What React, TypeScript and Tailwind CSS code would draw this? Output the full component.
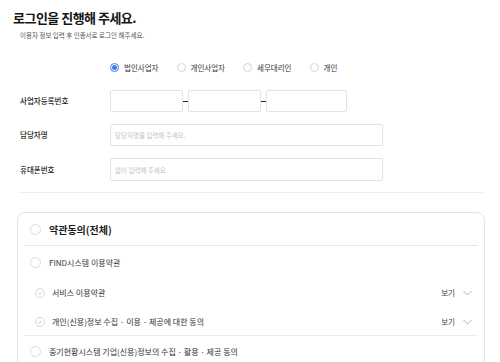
import React from 'react';

const FONT = "font-['Noto_Sans_CJK_KR','Noto_Sans',sans-serif]";

const BIZ_TYPES = ['법인사업자', '개인사업자', '세무대리인', '개인'];

const Radio: React.FC<{ checked?: boolean; label: string }> = ({ checked, label }) => (
  <label className="flex items-center gap-[5px]">
    <span
      className={`flex h-[9px] w-[9px] items-center justify-center rounded-full border ${
        checked ? 'border-[#3f7cf0]' : 'border-[#d4d4d4]'
      }`}
    >
      {checked && <span className="h-[5px] w-[5px] rounded-full bg-[#3f7cf0]" />}
    </span>
    <span className="text-[7.5px] leading-none text-[#333]">{label}</span>
  </label>
);

const Circle: React.FC<{ size?: string }> = ({ size = 'h-[11px] w-[11px]' }) => (
  <span className={`block shrink-0 rounded-full border border-[#dcdcdc] ${size}`} />
);

const CheckCircle: React.FC = () => (
  <svg width="10" height="10" viewBox="0 0 10 10" className="shrink-0">
    <circle cx="5" cy="5" r="4.5" fill="none" stroke="#d0d0d0" strokeWidth="0.8" />
    <polyline points="3,5.1 4.4,6.4 7,3.8" fill="none" stroke="#c4c4c4" strokeWidth="0.8" />
  </svg>
);

const Chevron: React.FC = () => (
  <svg width="9" height="6" viewBox="0 0 9 6">
    <polyline points="0.5,1 4.5,5 8.5,1" fill="none" stroke="#9a9a9a" strokeWidth="0.8" />
  </svg>
);

const FormRow: React.FC<{ label: string; children: React.ReactNode }> = ({ label, children }) => (
  <div className="flex items-center">
    <div className="w-[110px] pl-[20px] text-[7.5px] font-medium leading-none text-[#222]">{label}</div>
    {children}
  </div>
);

const inputCls =
  'h-[22px] rounded-[2px] border border-[#e3e3e3] bg-white px-[4px] text-[6.5px] text-[#333] outline-none placeholder:text-[#c3c3c3]';

const App: React.FC = () => {
  return (
    <div className={`${FONT} min-h-[362px] w-[500px] overflow-hidden bg-white`}>
      {/* Heading */}
      <div className="pl-[13px] pt-[10px]">
        <h1 className="text-[13px] font-bold leading-[16px] tracking-[-0.04em] text-[#161616]">
          로그인을 진행해 주세요.
        </h1>
        <p className="mt-[5px] pl-[7px] text-[6.5px] leading-[8px] text-[#555]">
          이용자 정보 입력 후 인증서로 로그인 해주세요.
        </p>
      </div>

      {/* Business type */}
      <div className="mt-[24px] flex gap-[18px] pl-[110px]">
        {BIZ_TYPES.map((t, i) => (
          <Radio key={t} label={t} checked={i === 0} />
        ))}
      </div>

      {/* Form */}
      <div className="mt-[18px] flex flex-col gap-[12px]">
        <FormRow label="사업자등록번호">
          <input className={`${inputCls} w-[73px]`} />
          <span className="h-[1px] w-[5px] bg-[#222]" />
          <input className={`${inputCls} w-[73px]`} />
          <span className="h-[1px] w-[5px] bg-[#222]" />
          <input className={`${inputCls} w-[81px]`} />
        </FormRow>
        <FormRow label="담당자명">
          <input className={`${inputCls} w-[273px]`} placeholder="담당자명을 입력해 주세요." />
        </FormRow>
        <FormRow label="휴대폰번호">
          <input className={`${inputCls} h-[23px] w-[273px]`} placeholder="없이 입력해 주세요" />
        </FormRow>
      </div>

      <div className="ml-[19px] mt-[11px] h-px w-[464px] bg-[#eeeeee]" />

      {/* Terms card */}
      <div className="ml-[17px] mt-[19px] w-[468px] rounded-[8px] border border-[#e2e2e2] px-[6px]">
        <div className="flex h-[33px] items-center gap-[8px] border-b border-[#e6e6e6] pl-[6px] pt-[1px]">
          <Circle />
          <span className="text-[10px] font-bold leading-none text-[#1a1a1a]">약관동의(전체)</span>
        </div>
        <div className="flex h-[32px] items-center gap-[8px] pl-[6px] pt-[1px]">
          <Circle />
          <span className="text-[8px] leading-none text-[#333]">FIND시스템 이용약관</span>
        </div>
        {['서비스 이용약관', '개인(신용)정보 수집 · 이용 · 제공에 대한 동의'].map((t) => (
          <div key={t} className="flex h-[29px] items-center pl-[11px] pr-[6px]">
            <CheckCircle />
            <span className="ml-[7px] flex-1 text-[8px] leading-none text-[#333]">{t}</span>
            <span className="text-[7.5px] leading-none text-[#444]">보기</span>
            <span className="ml-[8px]">
              <Chevron />
            </span>
          </div>
        ))}
        <div className="mt-[-1px] flex h-[32px] items-center gap-[8px] border-t border-[#ececec] pl-[6px]">
          <Circle />
          <span className="text-[8px] leading-none text-[#333]">
            중기현황시스템 기업(신용)정보의 수집 · 활용 · 제공 동의
          </span>
        </div>
      </div>
    </div>
  );
};

export default App;
